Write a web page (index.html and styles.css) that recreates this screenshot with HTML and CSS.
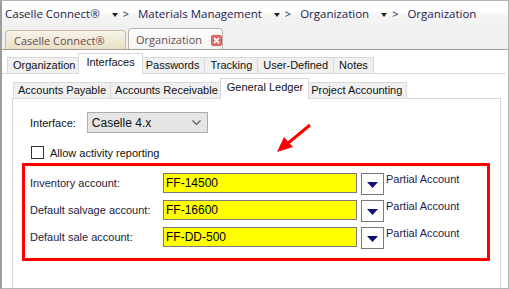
FILE: index.html
```html
<!DOCTYPE html>
<html lang="en">

<head>
    <meta charset="UTF-8">
    <title>Organization - General Ledger</title>
    <link rel="stylesheet" href="styles.css">
</head>

<body>
    <div class="window">
        <div class="crumbs">
            <span>Caselle Connect®</span><i class="drop"></i><span class="sep">&gt;</span>
            <span>Materials Management</span><i class="drop"></i><span class="sep">&gt;</span>
            <span>Organization</span><i class="drop"></i><span class="sep">&gt;</span>
            <span>Organization</span>
        </div>

        <div class="doc-tabs">
            <div class="doc-tab">Caselle Connect®</div>
            <div class="doc-tab active">Organization
                <svg class="close" width="13" height="13" viewBox="0 0 13 13">
                    <rect x="0.5" y="0.5" width="12" height="12" rx="2" fill="#e46a6a" stroke="#c45050"/>
                    <path d="M3.5 3.5 L9.5 9.5 M9.5 3.5 L3.5 9.5" stroke="#fff" stroke-width="2"/>
                </svg>
            </div>
        </div>

        <div class="content">
            <div class="tabs main-tabs">
                <div class="tab">Organization</div>
                <div class="tab active">Interfaces</div>
                <div class="tab">Passwords</div>
                <div class="tab">Tracking</div>
                <div class="tab">User-Defined</div>
                <div class="tab">Notes</div>
            </div>

            <div class="tabs sub-tabs">
                <div class="tab">Accounts Payable</div>
                <div class="tab">Accounts Receivable</div>
                <div class="tab active">General Ledger</div>
                <div class="tab">Project Accounting</div>
            </div>

            <div class="panel">
                <div class="field-row">
                    <label class="iface-label">Interface:</label>
                    <div class="select">
                        <span>Caselle 4.x</span>
                        <svg width="9" height="6" viewBox="0 0 9 6">
                            <path d="M0.5 0.5 L4.5 4.5 L8.5 0.5" fill="none" stroke="#555" stroke-width="1.1"/>
                        </svg>
                    </div>
                </div>

                <div class="check-row">
                    <span class="checkbox"></span>
                    <span>Allow activity reporting</span>
                </div>

                <div class="highlight">
                    <div class="acct-row">
                        <label>Inventory account:</label>
                        <div class="acct-input">FF-14500</div>
                        <div class="lookup"><svg width="11" height="6" viewBox="0 0 11 6"><polygon points="0,0 11,0 5.5,6" fill="#10107a"/></svg></div>
                        <span class="partial">Partial Account</span>
                    </div>
                    <div class="acct-row">
                        <label>Default salvage account:</label>
                        <div class="acct-input">FF-16600</div>
                        <div class="lookup"><svg width="11" height="6" viewBox="0 0 11 6"><polygon points="0,0 11,0 5.5,6" fill="#10107a"/></svg></div>
                        <span class="partial">Partial Account</span>
                    </div>
                    <div class="acct-row">
                        <label>Default sale account:</label>
                        <div class="acct-input">FF-DD-500</div>
                        <div class="lookup"><svg width="11" height="6" viewBox="0 0 11 6"><polygon points="0,0 11,0 5.5,6" fill="#10107a"/></svg></div>
                        <span class="partial">Partial Account</span>
                    </div>
                </div>

                <svg class="pointer" width="40" height="34" viewBox="0 0 40 34">
                    <line x1="37" y1="2" x2="14" y2="21" stroke="#ff0000" stroke-width="3"/>
                    <polygon points="4,29 11,14 20,24" fill="#ff0000"/>
                </svg>
            </div>
        </div>
    </div>
</body>

</html>
```

FILE: styles.css
```css
body {
    margin: 0;
    width: 509px;
    height: 289px;
    overflow: hidden;
    background: #fff;
    font-family: 'Liberation Sans', Arial, sans-serif;
    font-size: 11px;
    color: #111;
}

.window {
    box-sizing: border-box;
    width: 509px;
    height: 289px;
    border: 1px solid #b4b4b4;
    border-left: 2px solid #9c9c9c;
    display: flex;
    flex-direction: column;
}

.crumbs {
    height: 25px;
    display: flex;
    align-items: center;
    padding-left: 3px;
    font-family: 'Open Sans', sans-serif;
    font-size: 11.5px;
    color: #1c1c4e;
    background: linear-gradient(#fff 0, #fff 40%, #f4f4f4 60%, #f2f2f2 100%);
}

.drop {
    width: 0;
    height: 0;
    border-left: 3.5px solid transparent;
    border-right: 3.5px solid transparent;
    border-top: 4px solid #222;
    margin: 2px 5px 0 12px;
}

.sep {
    margin-right: 9px;
    font-size: 11px;
}

.doc-tabs {
    height: 23px;
    display: flex;
    align-items: flex-end;
    gap: 2px;
    padding-left: 3px;
    background: #f0f0f0;
    border-bottom: 1px solid #a59d90;
}

.doc-tab {
    box-sizing: border-box;
    height: 19px;
    width: 121px;
    padding: 2px 0 0 8px;
    border: 1px solid #c9bea4;
    border-bottom: none;
    border-radius: 4px 4px 0 0;
    background: linear-gradient(#f7f3e8, #e9e0c6);
    font-family: 'Open Sans', sans-serif;
    font-size: 11px;
    color: #6a4a52;
}

.doc-tab.active {
    height: 21px;
    width: 95px;
    padding: 3px 0 0 7px;
    display: flex;
    align-items: flex-start;
    gap: 9px;
    background: linear-gradient(#fdfdfd, #f4f4f4);
    border-color: #b9b2a4;
}

.close {
    margin-top: 2px;
}

.content {
    flex: 1;
    display: flex;
    flex-direction: column;
    position: relative;
}

.tabs {
    display: flex;
    align-items: flex-end;
    border-bottom: 1px solid #d9d9d9;
}

.tab {
    box-sizing: border-box;
    height: 16px;
    padding: 1px 5px 0;
    border: 1px solid #d9d9d9;
    border-bottom: none;
    margin-right: -1px;
    background: #f0f0f0;
    white-space: nowrap;
}

.tab.active {
    height: 21px;
    padding-top: 2px;
    margin: 0 -3px -1px -2px;
    background: #fff;
    position: relative;
    z-index: 1;
    padding-left: 7px;
    padding-right: 7px;
}

.main-tabs {
    height: 23px;
    padding-left: 5px;
    margin-right: 2px;
}

.sub-tabs {
    height: 20px;
    margin: 4px 7px 0 10px;
    padding-left: 1px;
}

.sub-tabs .tab {
    padding-left: 4px;
    padding-right: 4px;
}

.sub-tabs .tab.active {
    padding-left: 6px;
    padding-right: 5px;
}

.panel {
    flex: 1;
    margin: 0 7px 0 10px;
    border-left: 1px solid #d9d9d9;
    border-right: 1px solid #d9d9d9;
    padding: 13px 0 0 17px;
    position: relative;
}

.field-row {
    display: flex;
    align-items: center;
    gap: 11px;
}

.select {
    box-sizing: border-box;
    width: 121px;
    height: 21px;
    border: 1px solid #adadad;
    background: #e5e5e5;
    display: flex;
    align-items: center;
    justify-content: space-between;
    padding: 0 6px 0 4px;
    font-size: 12px;
}

.check-row {
    display: flex;
    align-items: center;
    gap: 6px;
    margin-top: 13px;
    padding-left: 1px;
}

.checkbox {
    box-sizing: border-box;
    width: 13px;
    height: 13px;
    border: 1px solid #333;
    background: #fff;
}

.highlight {
    box-sizing: border-box;
    width: 468px;
    margin: 4px 0 0 -8px;
    border: 3px solid #ff0000;
    padding: 7px 0 9px 5px;
    display: flex;
    flex-direction: column;
    gap: 5px;
}

.acct-row {
    display: flex;
    align-items: flex-start;
}

.acct-row label {
    width: 133px;
    padding-top: 4px;
    color: #1a1a3a;
}

.acct-input {
    box-sizing: border-box;
    width: 194px;
    height: 20px;
    border: 1px solid #7a7a7a;
    background: #ffff00;
    padding: 2px 0 0 2px;
    font-size: 12px;
    color: #000;
}

.lookup {
    box-sizing: border-box;
    width: 23px;
    height: 22px;
    margin-left: 4px;
    border: 1px solid #7a7a7a;
    background: #fff;
    display: flex;
    justify-content: center;
    align-items: flex-end;
    padding-bottom: 6px;
}

.partial {
    margin-left: 2px;
    color: #1c1c4e;
}

.pointer {
    position: absolute;
    left: 260px;
    top: 24px;
}
```
